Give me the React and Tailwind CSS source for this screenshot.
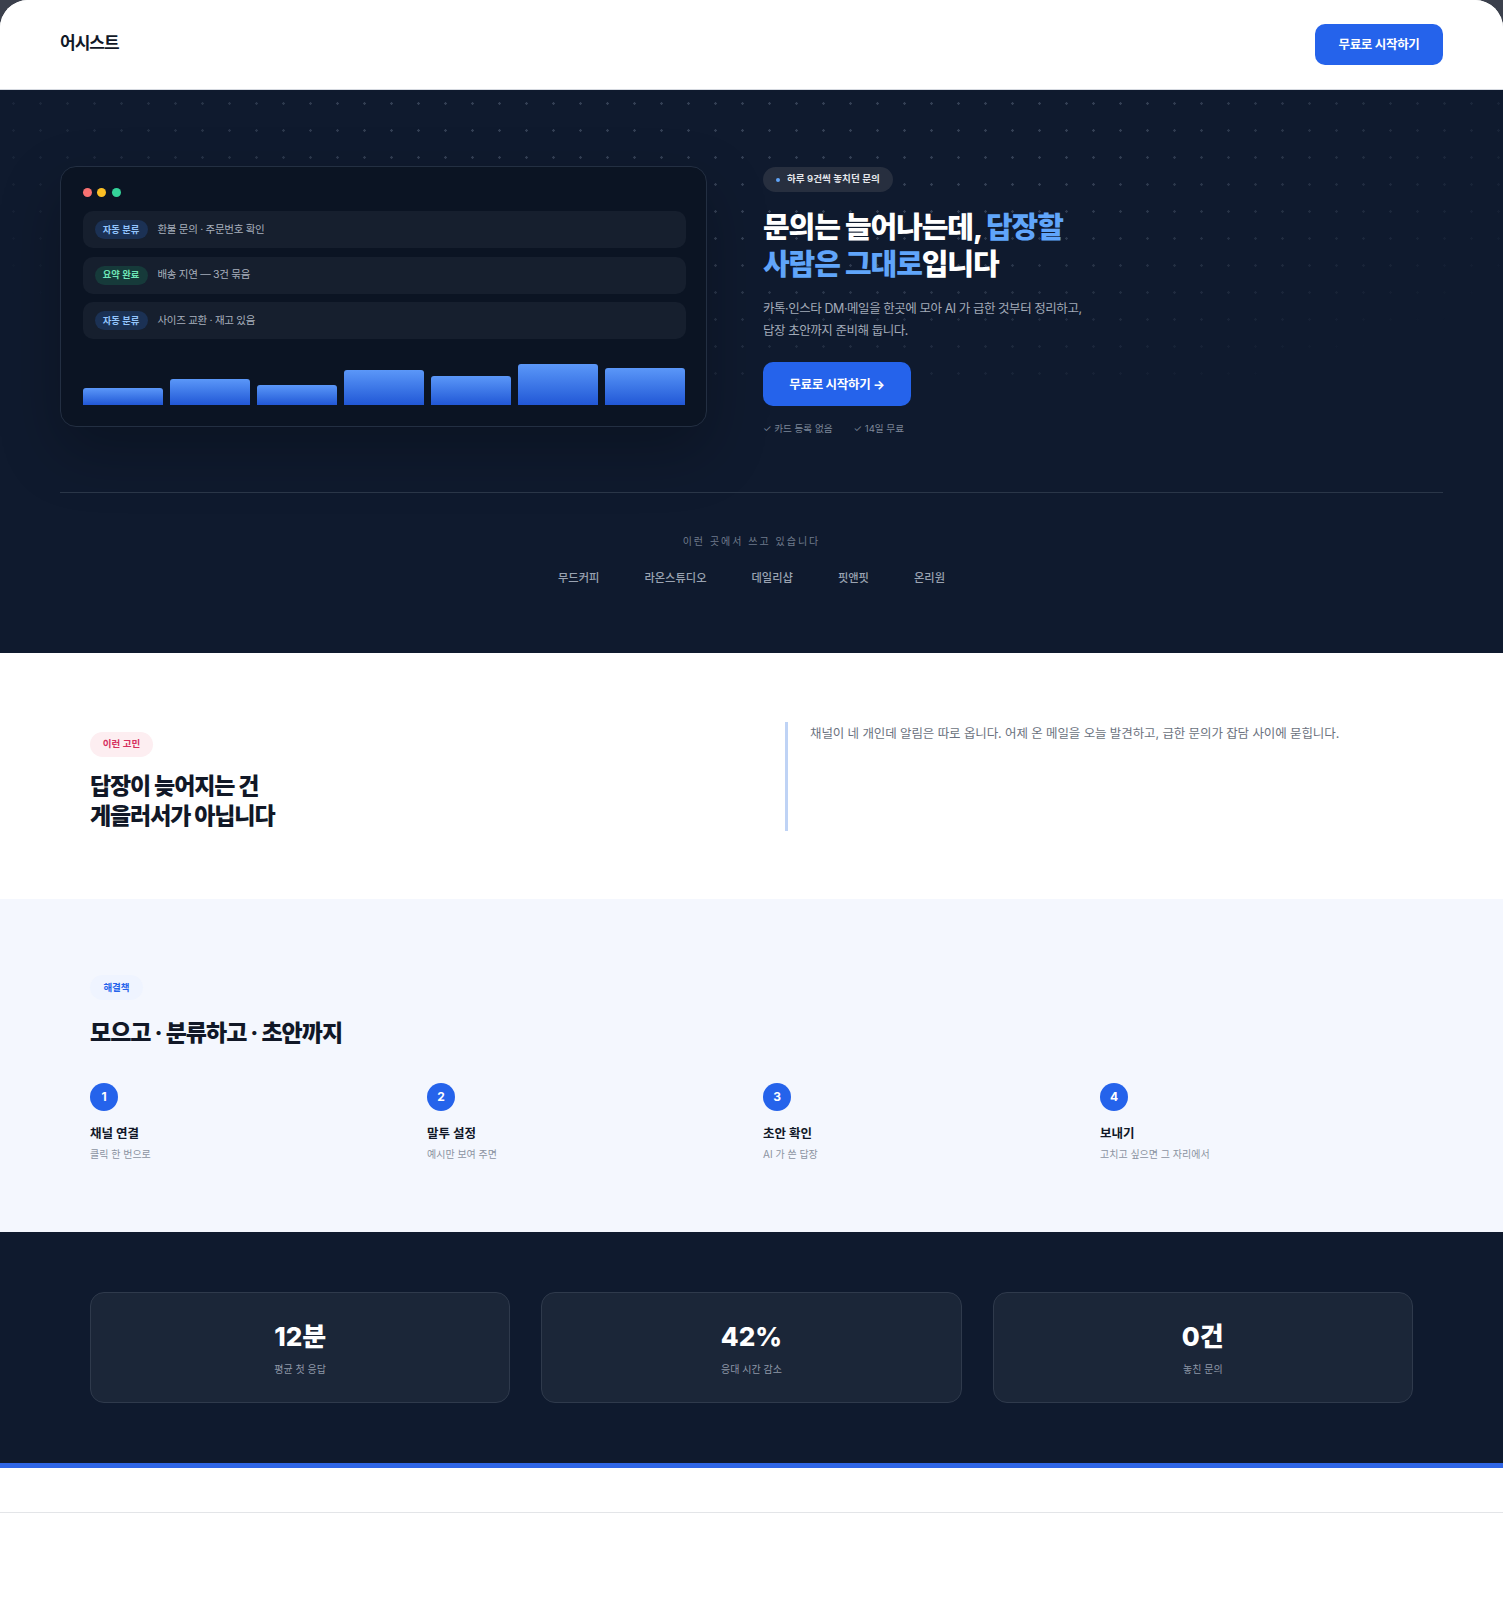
const FONT = "font-['Inter','Noto_Sans_CJK_KR',sans-serif]";

function Tag({ green, children }) {
  return (
    <span className={`flex h-[19px] w-[53px] shrink-0 items-center justify-center rounded-full text-[9.25px] font-semibold ${green ? "bg-[#163a3a] text-[#6ee7b7]" : "bg-[#1b3154] text-[#93c5fd]"}`}>
      {children}
    </span>
  );
}

function MockRow({ green, tag, text }) {
  return (
    <div className="flex h-[37px] items-center gap-[10px] rounded-[10px] bg-[#161f2e] px-[12px]">
      <Tag green={green}>{tag}</Tag>
      <span className="text-[10.5px] tracking-[-0.3px] text-[#a8b0bd]">{text}</span>
    </div>
  );
}

const bars = ["h-[17px]", "h-[26px]", "h-[20px]", "h-[35px]", "h-[29px]", "h-[41px]", "h-[37px]"];

function Step({ n, title, desc, w }) {
  return (
    <div className={w}>
      <div className="flex h-[28px] w-[28px] items-center justify-center rounded-full bg-[#2563eb] text-[12px] font-bold text-white">{n}</div>
      <div className="mt-[13px] text-[12.5px] leading-[20px] font-bold text-[#111827]">{title}</div>
      <div className="mt-0 text-[10px] leading-[20px] text-[#8b93a1]">{desc}</div>
    </div>
  );
}

function Stat({ value, label }) {
  return (
    <div className="flex h-[111px] flex-col items-center rounded-[14px] border-[1.5px] border-[#2f3a4c] bg-[#1b2638] pt-[26px]">
      <div className="text-[26px] leading-[36px] font-extrabold text-white">{value}</div>
      <div className="mt-[6px] text-[10px] leading-[16px] text-[#8f98a8]">{label}</div>
    </div>
  );
}

export default function App() {
  return (
    <div className={`h-[1600px] bg-[#3b404c] ${FONT}`}>
      <div className="h-full overflow-hidden rounded-t-[28px] bg-white">
        <header className="flex h-[90px] items-start justify-between border-b border-[#d5d9e0] bg-white px-[60px] pt-[24px]">
          <div className="pt-[6px] text-[17px] leading-[26px] font-bold tracking-[-1px] text-[#111827]">어시스트</div>
          <button className="h-[41px] w-[128px] rounded-[10px] bg-[#2563eb] pt-[1px] text-[12.5px] font-bold tracking-[-0.3px] text-white">무료로 시작하기</button>
        </header>

        <section className="relative h-[563px] bg-[#0f1a2e] px-[60px] pt-[76px]">
          <div className="absolute inset-x-0 top-0 h-[300px] bg-[radial-gradient(circle,rgba(148,163,184,0.28)_1px,transparent_1.5px)] bg-[size:27px_27px] [mask-image:radial-gradient(ellipse_at_50%_0%,black_35%,transparent_85%)]" />
          <div className="relative flex items-start gap-[56px]">
            <div className="flex h-[261px] w-[647px] shrink-0 flex-col rounded-[16px] border border-[#232f42] bg-[#0b1423] pt-[21px] pr-[20.5px] pl-[21.5px] shadow-[0_24px_60px_rgba(0,0,0,0.25)]">
              <div className="flex gap-[5.5px]">
                <span className="h-[9px] w-[9px] rounded-full bg-[#f87171]" />
                <span className="h-[9px] w-[9px] rounded-full bg-[#fbbf24]" />
                <span className="h-[9px] w-[9px] rounded-full bg-[#34d399]" />
              </div>
              <div className="mt-[14px] flex flex-col gap-[8.5px]">
                <MockRow tag="자동 분류" text="환불 문의 · 주문번호 확인" />
                <MockRow green tag="요약 완료" text="배송 지연 — 3건 묶음" />
                <MockRow tag="자동 분류" text="사이즈 교환 · 재고 있음" />
              </div>
              <div className="mt-[25px] flex items-end gap-[7px]">
                {bars.map((h, i) => (
                  <div key={i} className={`${h} flex-1 rounded-t-[3px] bg-gradient-to-b from-[#5b97f8] to-[#2257d6]`} />
                ))}
              </div>
            </div>

            <div className="pt-[1px]">
              <div className="flex h-[25px] w-[130px] items-center gap-[7px] rounded-full bg-[#272f3f] pl-[13px] text-[9.6px] font-semibold text-[#e5e7eb]">
                <span className="h-[4px] w-[4px] rounded-full bg-[#60a5fa]" />
                하루 9건씩 놓치던 문의
              </div>
              <h1 className="mt-[17px] text-[29px] leading-[37px] font-extrabold tracking-[-1.1px] text-white">
                문의는 늘어나는데, <span className="text-[#60a5fa]">답장할<br />사람은 그대로</span>입니다
              </h1>
              <p className="mt-[15px] text-[12.5px] leading-[22px] tracking-[-0.45px] text-[#a3abb9]">
                카톡·인스타 DM·메일을 한곳에 모아 AI 가 급한 것부터 정리하고,<br />답장 초안까지 준비해 둡니다.
              </p>
              <button className="mt-[20px] h-[44px] w-[148px] rounded-[10px] bg-[#2563eb] pt-[2px] text-[12.5px] font-bold tracking-[-0.3px] text-white">무료로 시작하기 →</button>
              <div className="mt-[15px] flex gap-[21px] text-[9.6px] leading-[16px] text-[#7d8798]">
                <span>✓ 카드 등록 없음</span>
                <span>✓ 14일 무료</span>
              </div>
            </div>
          </div>

          <div className="absolute inset-x-[60px] top-[402px] h-px bg-[#2a3648]" />
          <div className="absolute inset-x-0 top-[443px] text-center text-[10px] leading-[16px] tracking-[2px] text-[#6f7a8c]">이런 곳에서 쓰고 있습니다</div>
          <div className="absolute inset-x-0 top-[479px] flex justify-center gap-[45px] text-[11.25px] leading-[18px] font-medium text-[#9aa3b2]">
            <span>무드커피</span><span>라온스튜디오</span><span>데일리샵</span><span>핏앤핏</span><span>온리원</span>
          </div>
        </section>

        <section className="flex h-[246px] bg-white px-[90px] pt-[69px]">
          <div className="w-[695px] shrink-0">
            <span className="mt-[10px] flex h-[25px] w-[63px] items-center justify-center rounded-full bg-[#fdeef1] text-[9.5px] font-semibold text-[#d6305f]">이런 고민</span>
            <h2 className="mt-[14px] text-[23px] leading-[30px] font-extrabold tracking-[-1.1px] text-[#111827]">답장이 늦어지는 건<br />게을러서가 아닙니다</h2>
          </div>
          <div className="h-[109px] flex-1 border-l-[3px] border-[#bfd3f5] pt-[1px] pl-[22px] text-[12.5px] leading-[22px] tracking-[-0.1px] text-[#6b7280]">
            채널이 네 개인데 알림은 따로 옵니다. 어제 온 메일을 오늘 발견하고, 급한 문의가 잡담 사이에 묻힙니다.
          </div>
        </section>

        <section className="h-[333px] bg-[#f4f7fe] px-[90px] pt-[76px]">
          <span className="flex h-[25px] w-[53px] items-center justify-center rounded-full bg-[#eff4ff] pt-[1px] text-[9.5px] font-semibold text-[#2563eb]">해결책</span>
          <h2 className="mt-[15px] text-[23px] leading-[36px] font-extrabold tracking-[-1px] text-[#111827]">모으고 · 분류하고 · 초안까지</h2>
          <div className="mt-[32px] flex">
            <Step w="w-[337px]" n="1" title="채널 연결" desc="클릭 한 번으로" />
            <Step w="w-[336px]" n="2" title="말투 설정" desc="예시만 보여 주면" />
            <Step w="w-[337px]" n="3" title="초안 확인" desc="AI 가 쓴 답장" />
            <Step w="w-[300px]" n="4" title="보내기" desc="고치고 싶으면 그 자리에서" />
          </div>
        </section>

        <section className="h-[236px] border-b-[5px] border-[#2f66e6] bg-[#0f1a2e] px-[90px] pt-[60px]">
          <div className="grid grid-cols-3 gap-[31px]">
            <Stat value="12분" label="평균 첫 응답" />
            <Stat value="42%" label="응대 시간 감소" />
            <Stat value="0건" label="놓친 문의" />
          </div>
        </section>

        <footer className="mt-[44px] h-px bg-[#e3e5e8]" />
      </div>
    </div>
  );
}
